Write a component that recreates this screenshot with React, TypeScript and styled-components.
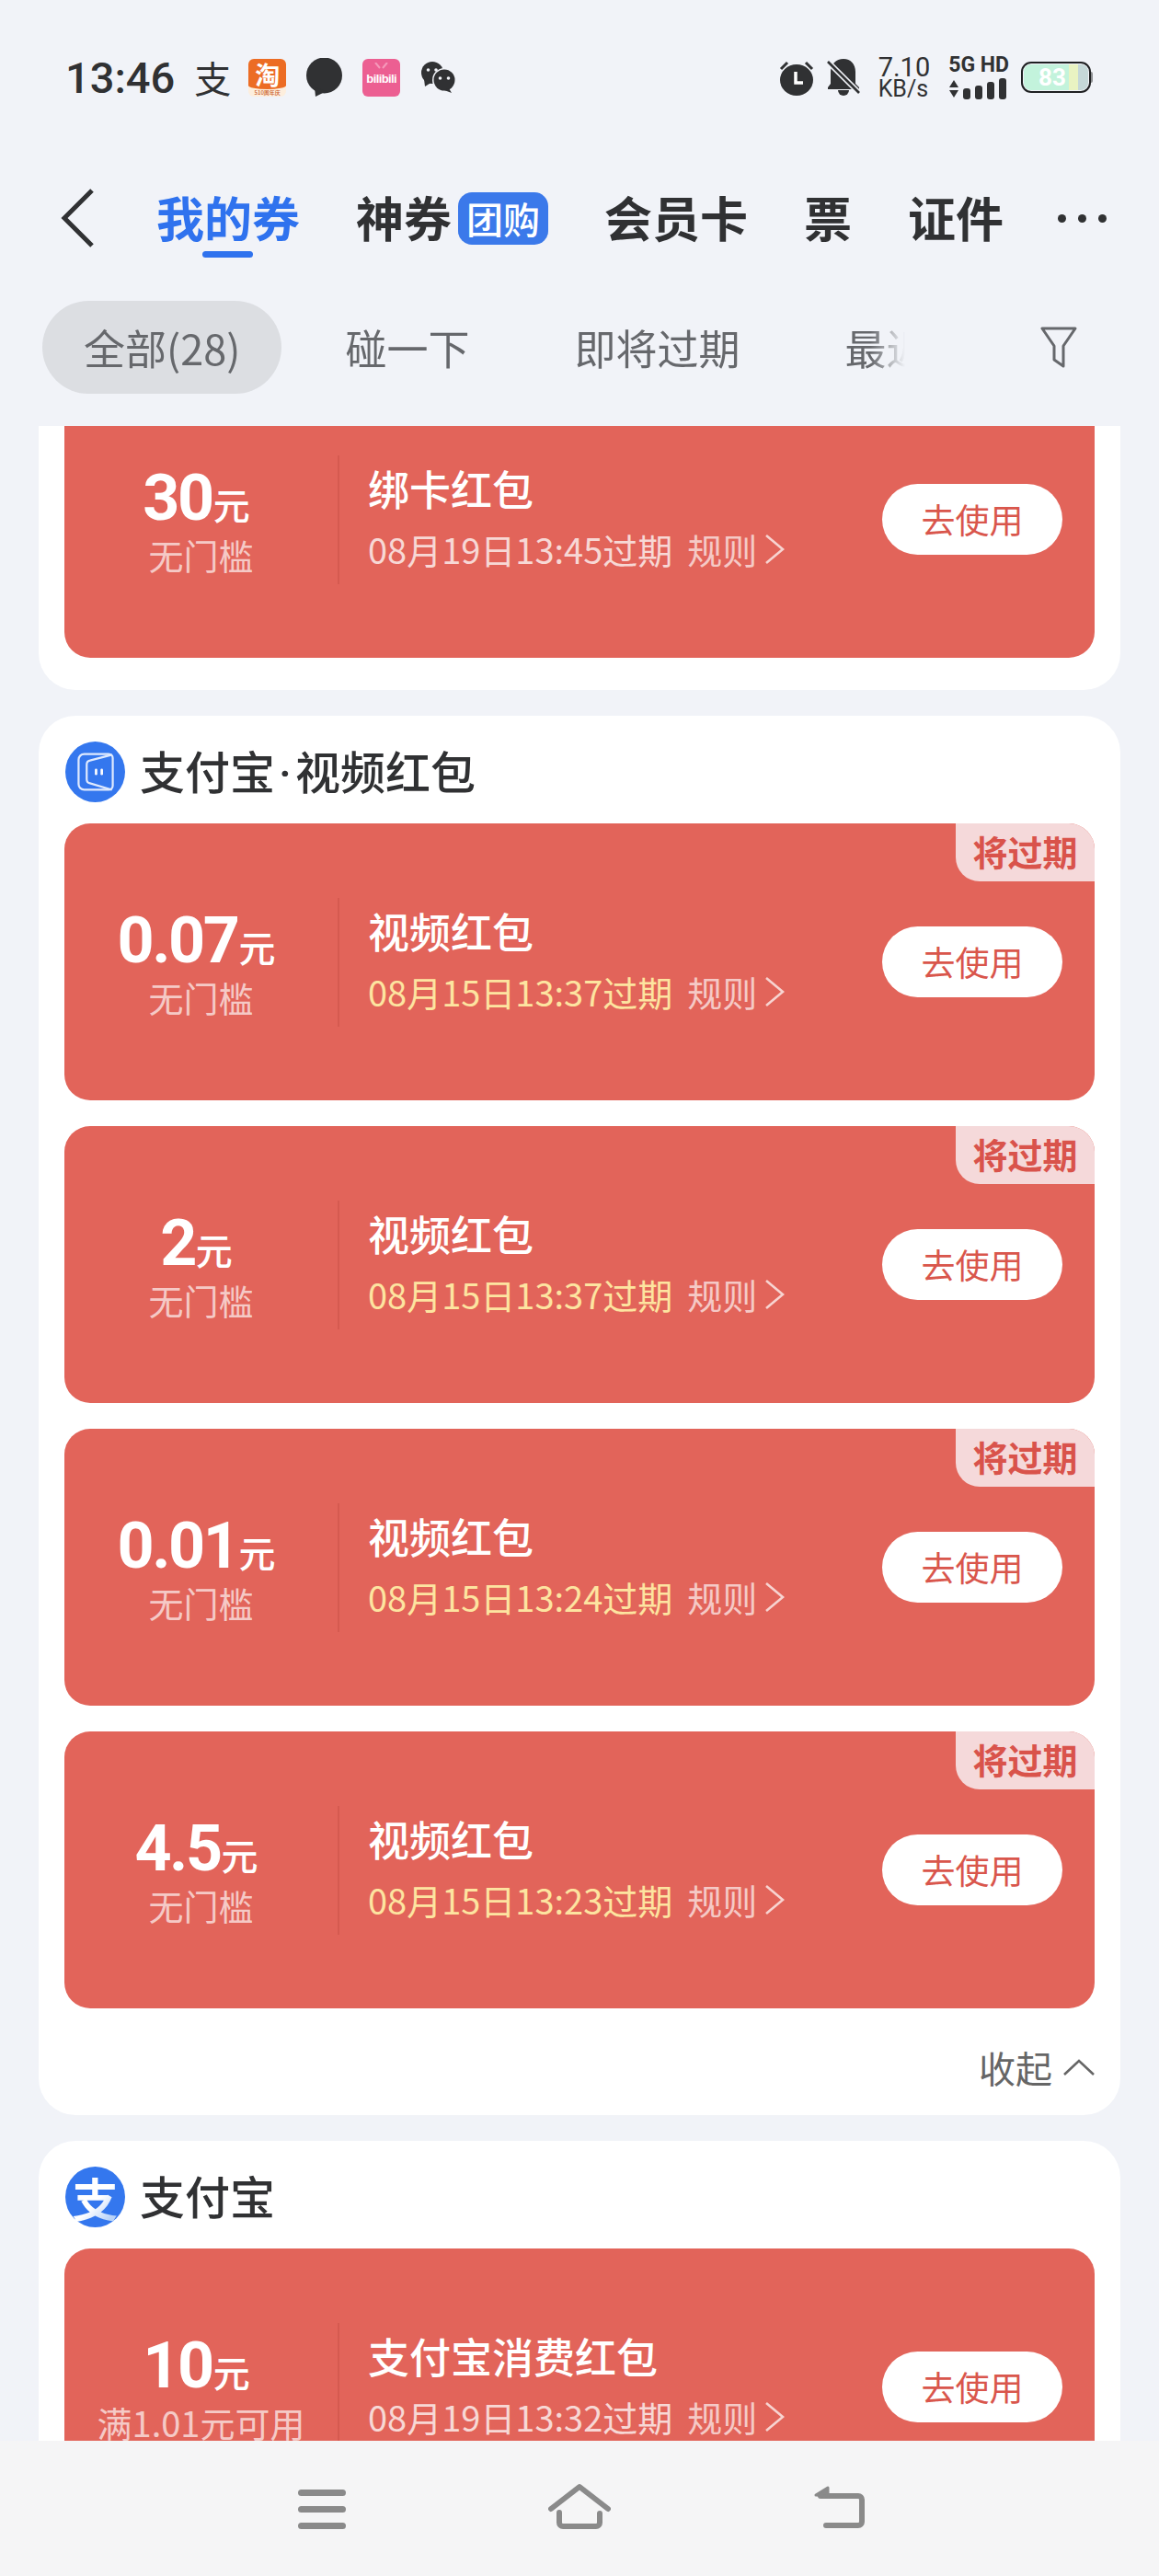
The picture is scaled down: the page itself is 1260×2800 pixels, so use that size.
import React from "react"
import styled, { createGlobalStyle } from "styled-components"

const sans = `Roboto, "Noto Sans CJK SC", sans-serif`
const cjk = `"Noto Sans CJK SC", sans-serif`
const red = "#e2645a"
const ink = "#303133"

const Global = createGlobalStyle`
  html, body { margin: 0; padding: 0; background: #f1f3f8; }
  * { box-sizing: border-box; }
`

const Page = styled.div`
  width: 1260px;
  height: 2800px;
  display: flex;
  flex-direction: column;
  overflow: hidden;
  background: #f1f3f8;
  font-family: ${cjk};
  color: ${ink};
`

/* status bar */
const StatusBar = styled.div`
  height: 168px;
  flex: none;
  display: flex;
  align-items: center;
  justify-content: space-between;
  padding: 0 74px 0 71px;
`
const StatusGroup = styled.div<{ $gap: number }>`
  display: flex;
  align-items: center;
  gap: ${p => p.$gap}px;
`
const Clock = styled.span`
  font: 500 47px/1 ${sans};
  color: ${ink};
`
const PayGlyph = styled.span`
  width: 38px;
  font: 400 40px/1 ${cjk};
  text-align: center;
`
const TaobaoIcon = styled.div`
  width: 41px;
  height: 41px;
  border-radius: 6px;
  overflow: hidden;
  background: #fdeedd;
  display: flex;
  flex-direction: column;
  align-items: center;
`
const TaobaoTop = styled.div`
  width: 100%;
  height: 33px;
  flex: none;
  background: #ec6c24;
  border-radius: 0 0 50% 50% / 0 0 4px 4px;
  color: #fff;
  font: 700 27px/33px ${cjk};
  text-align: center;
`
const TaobaoFoot = styled.div`
  font: 500 6px/8px ${cjk};
  color: #c8591e;
  white-space: nowrap;
`
const BiliIcon = styled.div`
  position: relative;
  width: 41px;
  height: 41px;
  border-radius: 6px;
  background: #ec5f92;
  color: #fff;
  font: 700 13px/43px "Liberation Sans Narrow", "Liberation Sans", sans-serif;
  letter-spacing: -0.6px;
  text-align: center;
`
const BiliAntenna = styled.svg`
  position: absolute;
  left: 10px;
  top: 4px;
`
const Speed = styled.div`
  display: flex;
  flex-direction: column;
  align-items: flex-start;
  font-family: ${sans};
  color: ${ink};
`
const SpeedValue = styled.span`
  font-size: 29px;
  line-height: 26px;
`
const SpeedUnit = styled.span`
  font-size: 25px;
  line-height: 22px;
`
const Network = styled.div`
  display: flex;
  flex-direction: column;
  gap: 3px;
`
const NetworkLabel = styled.span`
  font: 700 23px/22px "Liberation Sans Narrow", Roboto, sans-serif;
  white-space: nowrap;
  color: ${ink};
`
const Battery = styled.div`
  position: relative;
  width: 76px;
  height: 34px;
  padding: 1px;
  border: 2px solid #1f2022;
  border-radius: 11px;
  &::after {
    content: "";
    position: absolute;
    right: -4px;
    top: 9px;
    width: 2px;
    height: 12px;
    background: #8d8f92;
    border-radius: 0 2px 2px 0;
  }
`
const BatteryFill = styled.div`
  height: 100%;
  border-radius: 8px;
  background: linear-gradient(to right, #c3f3dc 0, #c3f3dc 70%, #e9f3c2 70%, #e9f3c2 85%, #c5d8d8 85%);
  color: #fff;
  font: 700 26px/28px ${sans};
  text-align: center;
  padding-right: 8px;
`

/* nav tabs */
const NavRow = styled.div`
  height: 138px;
  flex: none;
  display: flex;
  align-items: center;
  padding-left: 66px;
`
const BackIcon = styled.svg`
  margin-right: 68px;
  flex: none;
`
const Tabs = styled.div`
  display: flex;
  align-items: center;
  gap: 61px;
`
const Tab = styled.div<{ $active?: boolean }>`
  position: relative;
  display: flex;
  align-items: center;
  gap: 7px;
  margin-top: -3px;
  font: 700 52px/60px ${cjk};
  color: ${p => (p.$active ? "#2f72ee" : ink)};
  white-space: nowrap;
`
const TabUnderline = styled.span`
  position: absolute;
  left: 50px;
  top: 67px;
  width: 55px;
  height: 7px;
  border-radius: 4px;
  background: #2f72ee;
`
const TabBadge = styled.span`
  width: 98px;
  height: 57px;
  margin-top: 3px;
  border-radius: 15px;
  background: #3b79ea;
  color: #fff;
  font: 500 40px/57px ${cjk};
  text-align: center;
`
const MoreDots = styled.div`
  display: flex;
  gap: 13px;
  margin-left: 59px;
`
const Dot = styled.span`
  width: 9px;
  height: 9px;
  border-radius: 50%;
  background: ${ink};
`

/* filter chips */
const FilterRow = styled.div`
  height: 157px;
  flex: none;
  display: flex;
  align-items: flex-start;
  padding: 21px 0 0 46px;
`
const ChipScroller = styled.div`
  width: 938px;
  display: flex;
  gap: 24px;
  overflow: hidden;
  mask-image: linear-gradient(to right, #000 96%, transparent 100%);
`
const Chip = styled.div<{ $active?: boolean }>`
  flex: none;
  height: 101px;
  padding: 0 45px;
  border-radius: 51px;
  background: ${p => (p.$active ? "#dcdee2" : "transparent")};
  color: #66686c;
  font: 400 45px/101px ${cjk};
  white-space: nowrap;
`
const FilterIcon = styled.svg`
  margin: 28px 0 0 147px;
  flex: none;
`

/* scrolled list of coupons */
const Viewport = styled.div`
  flex: 1;
  min-height: 0;
  overflow: hidden;
`
const Feed = styled.div`
  margin-top: -166px;
  display: flex;
  flex-direction: column;
  gap: 28px;
  padding: 0 42px;
`
const Group = styled.section`
  background: #fff;
  border-radius: 40px;
  padding: 0 28px 35px;
`
const GroupHead = styled.div`
  height: 117px;
  padding-top: 5px;
  display: flex;
  align-items: center;
  gap: 16px;
`
const GroupLogo = styled.div`
  width: 65px;
  height: 66px;
  margin-left: 1px;
  border-radius: 50%;
  background: #3477ee;
  display: flex;
  align-items: center;
  justify-content: center;
  flex: none;
`
const PayLogoGlyph = styled.span`
  font: 700 50px/62px ${cjk};
  background: linear-gradient(135deg, #fff 55%, #b9d3f8 85%);
  background-clip: text;
  -webkit-background-clip: text;
  color: transparent;
`
const GroupTitle = styled.h2`
  margin: 5px 0 0;
  font: 500 49px/60px ${sans};
  color: ${ink};
`
const TitleDot = styled.span`
  margin: 0 4px;
`
const CardStack = styled.div`
  display: flex;
  flex-direction: column;
  gap: 28px;
`
const Card = styled.article`
  position: relative;
  height: 301px;
  background: ${red};
  border-radius: 28px;
  overflow: hidden;
  display: flex;
  align-items: center;
  color: #fff;
`
const Amount = styled.div`
  width: 297px;
  flex: none;
  display: flex;
  flex-direction: column;
  align-items: center;
`
const AmountLine = styled.div`
  display: flex;
  align-items: baseline;
  height: 70px;
  margin: 3px 10px 0 0;
`
const AmountValue = styled.span`
  font: 700 70px/70px ${sans};
  letter-spacing: -2.5px;
`
const AmountUnit = styled.span`
  font: 500 40px/70px ${cjk};
  margin-left: 1px;
`
const AmountNote = styled.div`
  margin-top: 3px;
  font: 400 38px/48px ${cjk};
  white-space: nowrap;
  color: rgba(255, 255, 255, 0.68);
`
const Divider = styled.div`
  width: 2px;
  height: 140px;
  flex: none;
  background: #d55a50;
`
const Info = styled.div`
  flex: 1;
  min-width: 0;
  padding: 0 0 4px 31px;
`
const CardTitle = styled.div`
  font: 500 45px/52px ${cjk};
  color: #fff;
  white-space: nowrap;
`
const Meta = styled.div`
  margin-top: 16px;
  display: flex;
  align-items: center;
  height: 48px;
  font: 400 38px/48px ${cjk};
  white-space: nowrap;
`
const Expiry = styled.span<{ $soon?: boolean }>`
  color: ${p => (p.$soon ? "#fde4a0" : "rgba(255, 255, 255, 0.75)")};
  margin-right: 16px;
`
const Rule = styled.span`
  color: rgba(255, 255, 255, 0.68);
  margin-right: 8px;
`
const UseButton = styled.button`
  width: 196px;
  height: 77px;
  flex: none;
  margin-right: 35px;
  border: 0;
  padding: 0;
  border-radius: 39px;
  background: #fff;
  color: #d9564c;
  font: 400 37px/77px ${cjk};
`
const ExpireBadge = styled.div`
  position: absolute;
  top: 0;
  right: 0;
  width: 151px;
  height: 63px;
  background: #f5d9da;
  border-bottom-left-radius: 26px;
  color: #d9534b;
  font: 700 38px/60px ${cjk};
  text-align: center;
`
const GroupFoot = styled.div`
  padding-top: 41px;
  height: 87px;
  margin-bottom: -6px;
  display: flex;
  justify-content: flex-end;
  align-items: center;
  gap: 12px;
  color: #666;
  font: 400 40px/46px ${cjk};
`

/* system navigation */
const SystemBar = styled.nav`
  height: 147px;
  flex: none;
  position: relative;
  background: #f5f5f6;
  display: flex;
  justify-content: center;
  align-items: flex-start;
  gap: 220px;
  padding: 46px 0 0 4px;
`

const Chevron = () => (
  <svg width="22" height="34" viewBox="0 0 22 34" fill="none">
    <path d="M2 2l18 15L2 32" stroke="rgba(255,255,255,0.72)" strokeWidth="2.6" />
  </svg>
)

const ChevronUp = () => (
  <svg width="34" height="20" viewBox="0 0 34 20" fill="none">
    <path d="M1 18L17 3l16 15" stroke="#666" strokeWidth="2.6" />
  </svg>
)

const VideoMark = () => (
  <svg width="46" height="46" viewBox="0 0 52 52" fill="none">
    <path d="M12 4h30a5 5 0 0 1 5 5v34a5 5 0 0 1-5 5H12a7 7 0 0 1-7-7V11a7 7 0 0 1 7-7z" stroke="#dfeafe" strokeWidth="2.5" />
    <path d="M46 5L19 12a5 5 0 0 0-4 5v18a5 5 0 0 0 4 5l27 8" stroke="#dfeafe" strokeWidth="2.5" />
    <rect x="25" y="22" width="3" height="8" rx="1.5" fill="#fff" />
    <rect x="32" y="22" width="3" height="8" rx="1.5" fill="#fff" />
  </svg>
)

const AlarmIcon = () => (
  <svg width="38" height="39" viewBox="0 0 38 39">
    <ellipse cx="19" cy="22" rx="18" ry="17" fill={ink} />
    <path d="M2 10l7-7M36 10l-7-7" stroke={ink} strokeWidth="3" />
    <path d="M18 13v12h8" fill="none" stroke="#fff" strokeWidth="3.5" />
  </svg>
)

const BellOffIcon = () => (
  <svg width="36" height="40" viewBox="0 0 36 40">
    <path d="M18 0c8 0 13 6 13 14v13l4 4v2H1v-2l3-4V14C4 6 10 0 18 0z" fill={ink} />
    <path d="M12 34h12a6 6 0 0 1-12 0z" fill={ink} />
    <path d="M1 3l34 34" stroke="#f1f3f8" strokeWidth="6" />
    <path d="M1 3l34 34" stroke={ink} strokeWidth="2.6" />
  </svg>
)

const BubbleIcon = () => (
  <svg width="41" height="42" viewBox="0 0 41 42">
    <circle cx="20.5" cy="19" r="19.5" fill={ink} />
    <path d="M10 32l1 10 12-6z" fill={ink} />
  </svg>
)

const WechatIcon = () => (
  <svg width="40" height="34" viewBox="0 0 40 34">
    <circle cx="14" cy="12" r="12" fill={ink} />
    <path d="M5 19l1 8 8-5z" fill={ink} />
    <circle cx="9.5" cy="9" r="1.8" fill="#f1f3f8" />
    <circle cx="18" cy="9" r="1.8" fill="#f1f3f8" />
    <circle cx="27" cy="20" r="13" fill="#f1f3f8" />
    <circle cx="27" cy="20" r="11.5" fill={ink} />
    <path d="M32 29l3 5-8-3z" fill={ink} />
    <circle cx="22.5" cy="18" r="1.8" fill="#f1f3f8" />
    <circle cx="31.5" cy="18" r="1.8" fill="#f1f3f8" />
  </svg>
)

const SignalIcon = () => (
  <svg width="64" height="24" viewBox="0 0 64 24" fill={ink}>
    <path d="M1 10l5-8 5 8zM1 13l5 8 5-8z" />
    <rect x="16" y="11" width="8" height="12" rx="3" />
    <rect x="29" y="8" width="8" height="15" rx="3" />
    <rect x="42" y="4" width="8" height="19" rx="3" />
    <rect x="55" y="0" width="8" height="23" rx="3" />
  </svg>
)

const coupons = {
  video: [
    { value: "0.07", time: "08月15日13:37过期" },
    { value: "2", time: "08月15日13:37过期" },
    { value: "0.01", time: "08月15日13:24过期" },
    { value: "4.5", time: "08月15日13:23过期" },
  ],
}

type CouponProps = {
  value: string
  note: string
  title: string
  time: string
  soon?: boolean
}

function Coupon({ value, note, title, time, soon }: CouponProps) {
  return (
    <Card>
      <Amount>
        <AmountLine>
          <AmountValue>{value}</AmountValue>
          <AmountUnit>元</AmountUnit>
        </AmountLine>
        <AmountNote>{note}</AmountNote>
      </Amount>
      <Divider />
      <Info>
        <CardTitle>{title}</CardTitle>
        <Meta>
          <Expiry $soon={soon}>{time}</Expiry>
          <Rule>规则</Rule>
          <Chevron />
        </Meta>
      </Info>
      <UseButton>去使用</UseButton>
      {soon && <ExpireBadge>将过期</ExpireBadge>}
    </Card>
  )
}

export default function App() {
  return (
    <Page>
      <Global />
      <StatusBar>
        <StatusGroup $gap={21}>
          <Clock>13:46</Clock>
          <PayGlyph>支</PayGlyph>
          <TaobaoIcon>
            <TaobaoTop>淘</TaobaoTop>
            <TaobaoFoot>510周年庆</TaobaoFoot>
          </TaobaoIcon>
          <BubbleIcon />
          <BiliIcon>
            <BiliAntenna width="21" height="8" viewBox="0 0 21 8" fill="none">
              <path d="M4 0l5 6M17 0l-5 6" stroke="#f59abb" strokeWidth="2" />
            </BiliAntenna>
            bilibili
          </BiliIcon>
          <WechatIcon />
        </StatusGroup>
        <StatusGroup $gap={20}>
          <StatusGroup $gap={14}>
            <AlarmIcon />
            <BellOffIcon />
          </StatusGroup>
          <Speed>
            <SpeedValue>7.10</SpeedValue>
            <SpeedUnit>KB/s</SpeedUnit>
          </Speed>
          <StatusGroup $gap={13}>
            <Network>
              <NetworkLabel>5G HD</NetworkLabel>
              <SignalIcon />
            </Network>
            <Battery>
              <BatteryFill>83</BatteryFill>
            </Battery>
          </StatusGroup>
        </StatusGroup>
      </StatusBar>

      <NavRow>
        <BackIcon width="36" height="64" viewBox="0 0 36 64" fill="none">
          <path d="M34 2L4 32l30 30" stroke={ink} strokeWidth="5" />
        </BackIcon>
        <Tabs>
          <Tab $active>
            我的券
            <TabUnderline />
          </Tab>
          <Tab>
            神券
            <TabBadge>团购</TabBadge>
          </Tab>
          <Tab>会员卡</Tab>
          <Tab>票</Tab>
          <Tab>证件</Tab>
        </Tabs>
        <MoreDots>
          <Dot />
          <Dot />
          <Dot />
        </MoreDots>
      </NavRow>

      <FilterRow>
        <ChipScroller>
          <Chip $active>全部(28)</Chip>
          <Chip>碰一下</Chip>
          <Chip>即将过期</Chip>
          <Chip>最近新增</Chip>
        </ChipScroller>
        <FilterIcon width="40" height="48" viewBox="0 0 40 48" fill="none">
          <path d="M2 2h36L25 21v22l-10-7V21z" stroke="#66686c" strokeWidth="3" strokeLinejoin="round" />
        </FilterIcon>
      </FilterRow>

      <Viewport>
        <Feed>
          <Group>
            <GroupHead />
            <Coupon value="30" note="无门槛" title="绑卡红包" time="08月19日13:45过期" />
          </Group>

          <Group>
            <GroupHead>
              <GroupLogo>
                <VideoMark />
              </GroupLogo>
              <GroupTitle>
                支付宝<TitleDot>·</TitleDot>视频红包
              </GroupTitle>
            </GroupHead>
            <CardStack>
              {coupons.video.map(c => (
                <Coupon key={c.value} value={c.value} note="无门槛" title="视频红包" time={c.time} soon />
              ))}
            </CardStack>
            <GroupFoot>
              收起
              <ChevronUp />
            </GroupFoot>
          </Group>

          <Group>
            <GroupHead>
              <GroupLogo>
                <PayLogoGlyph>支</PayLogoGlyph>
              </GroupLogo>
              <GroupTitle>支付宝</GroupTitle>
            </GroupHead>
            <Coupon value="10" note="满1.01元可用" title="支付宝消费红包" time="08月19日13:32过期" />
          </Group>
        </Feed>
      </Viewport>

      <SystemBar>
        <svg width="52" height="52" viewBox="0 0 52 52" fill="#8a8a8a">
          <rect x="0" y="7" width="52" height="7" rx="3.5" />
          <rect x="0" y="25" width="52" height="7" rx="3.5" />
          <rect x="0" y="43" width="52" height="7" rx="3.5" />
        </svg>
        <svg width="68" height="52" viewBox="0 0 68 52" fill="none" stroke="#8a8a8a" strokeWidth="6" strokeLinecap="round" strokeLinejoin="round">
          <path d="M3 28L34 4l31 24" />
          <path d="M12 32v11a4 4 0 0 0 4 4h36a4 4 0 0 0 4-4V33" />
        </svg>
        <svg width="56" height="52" viewBox="0 0 56 52" fill="none" stroke="#8a8a8a" strokeWidth="6" strokeLinecap="round" strokeLinejoin="round">
          <path d="M8 14h41a4 4 0 0 1 4 4v24a4 4 0 0 1-4 4H14" />
          <path d="M3 13l13-8v9z" fill="#8a8a8a" strokeWidth="3" />
        </svg>
      </SystemBar>
    </Page>
  )
}
